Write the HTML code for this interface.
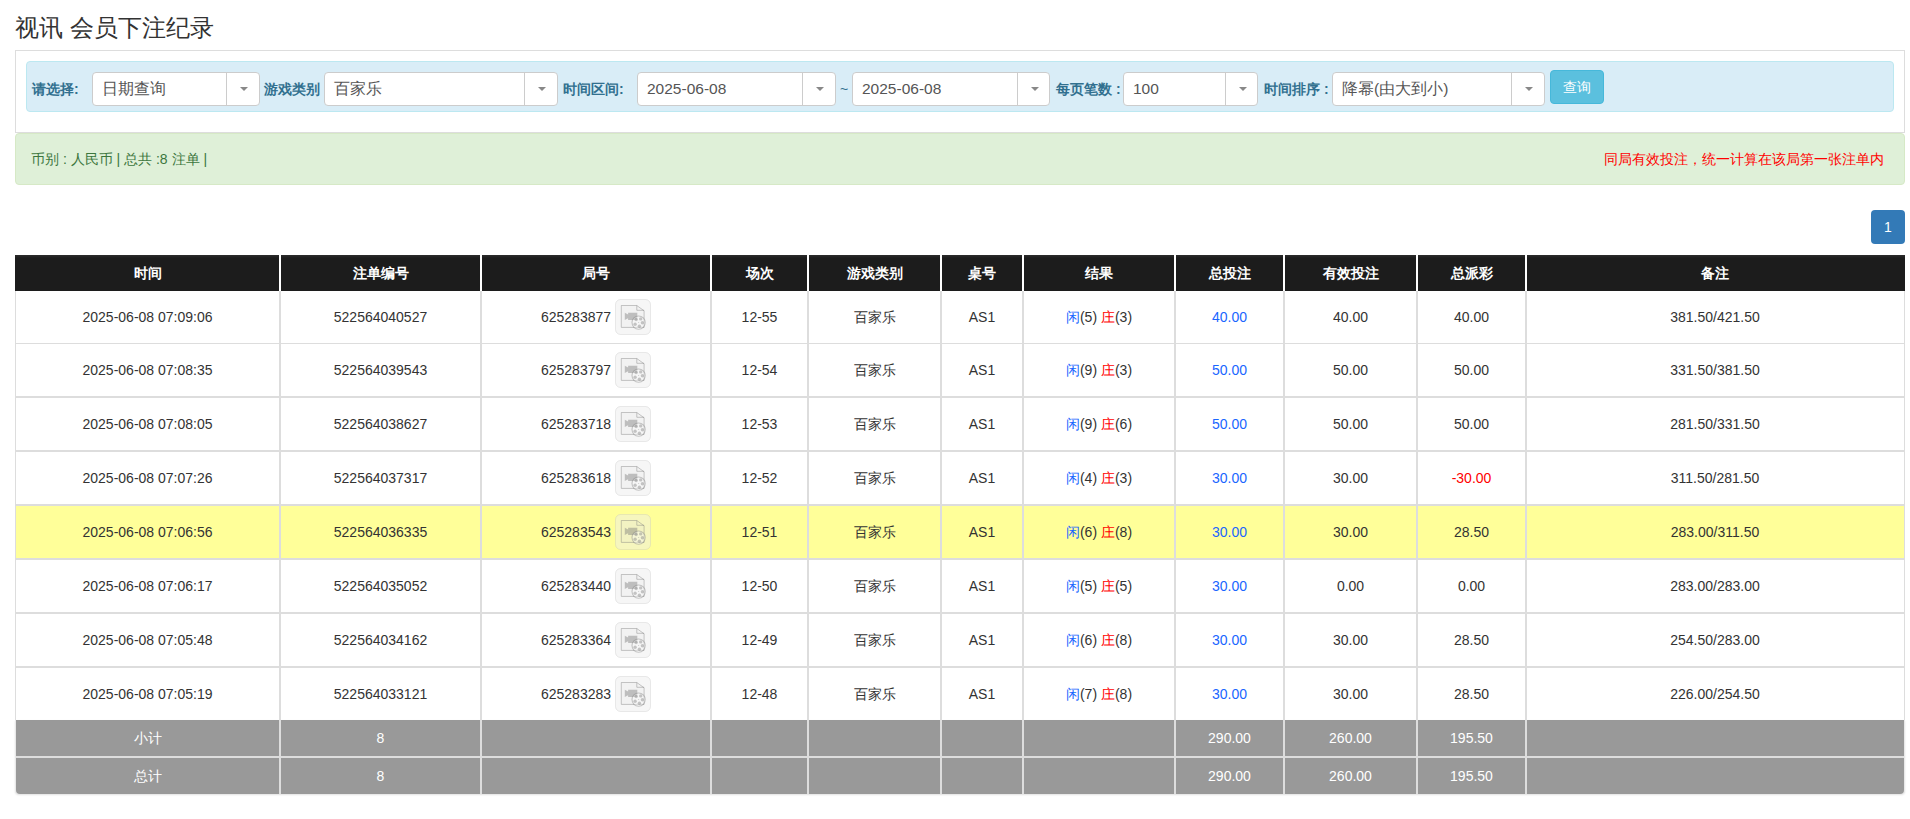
<!DOCTYPE html><html><head><meta charset="utf-8"><style>
*{box-sizing:border-box}
body{margin:0;width:1910px;height:819px;overflow:hidden;background:#fff;font-family:"Liberation Sans",sans-serif;color:#333;font-size:14px;position:relative}
.a{position:absolute;white-space:nowrap}
.title{left:15px;top:11px;font-size:24px;line-height:34px;color:#333}
.panel{left:15px;top:50px;width:1890px;height:83px;border:1px solid #ddd}
.well{left:26px;top:61px;width:1868px;height:51px;background:#d9edf7;border:1px solid #bce8f1;border-radius:4px}
.lbl{top:79px;font-weight:bold;color:#31708f;font-size:14px;line-height:20px}
.sel{position:absolute;top:72px;height:34px;background:#fff;border:1px solid #ccc;border-radius:4px}
.st{position:absolute;left:9px;top:6px;line-height:20px;font-size:15.5px;color:#555}
.dv{position:absolute;top:0;bottom:0;width:1px;background:#ccc}
.car{position:absolute;top:14px;width:0;height:0;border-left:4px solid transparent;border-right:4px solid transparent;border-top:4px solid #888}
.btn{left:1550px;top:70px;width:54px;height:34px;background:#5bc0de;border:1px solid #46b8da;border-radius:4px;color:#fff;text-align:center;line-height:32px;font-size:14px}
.alert{left:15px;top:133px;width:1890px;height:52px;background:#dff0d8;border:1px solid #d6e9c6;border-radius:4px}
.gt{left:31px;top:149px;color:#3c763d;line-height:20px}
.rt{left:1604px;top:149px;color:#f00;line-height:20px}
.pg{left:1871px;top:210px;width:34px;height:34px;background:#337ab7;border-radius:4px;color:#fff;text-align:center;line-height:34px;font-size:14px}
.th{background:linear-gradient(#2a2a2a,#1c1c1c 3px);color:#fff;font-weight:bold;text-align:center}
.cell{position:absolute;text-align:center;line-height:20px}
.b{color:#1a66ff}.r{color:#f00}
</style></head><body>
<div class="a title">视讯 会员下注纪录</div>
<div class="a panel"></div><div class="a well"></div>
<div class="a lbl" style="left:32px">请选择:</div>
<div class="sel" style="left:92px;width:168px"><span class="st">日期查询</span><div class="dv" style="left:133px"></div><div class="car" style="left:147px"></div></div>
<div class="a lbl" style="left:264px">游戏类别</div>
<div class="sel" style="left:324px;width:234px"><span class="st">百家乐</span><div class="dv" style="left:199px"></div><div class="car" style="left:213px"></div></div>
<div class="a lbl" style="left:563px">时间区间:</div>
<div class="sel" style="left:637px;width:199px"><span class="st">2025-06-08</span><div class="dv" style="left:164px"></div><div class="car" style="left:178px"></div></div>
<div class="a lbl" style="left:840px;font-weight:normal">~</div>
<div class="sel" style="left:852px;width:198px"><span class="st">2025-06-08</span><div class="dv" style="left:164px"></div><div class="car" style="left:178px"></div></div>
<div class="a lbl" style="left:1056px">每页笔数 :</div>
<div class="sel" style="left:1123px;width:135px"><span class="st">100</span><div class="dv" style="left:101px"></div><div class="car" style="left:115px"></div></div>
<div class="a lbl" style="left:1264px">时间排序 :</div>
<div class="sel" style="left:1332px;width:213px"><span class="st">降幂(由大到小)</span><div class="dv" style="left:178px"></div><div class="car" style="left:192px"></div></div>
<div class="a btn">查询</div>
<div class="a alert"></div><div class="a gt">币别 : 人民币 | 总共 :8 注单 |</div><div class="a rt">同局有效投注，统一计算在该局第一张注单内</div>
<div class="a pg">1</div>
<div class="a" style="left:15px;top:255px;width:1890px;height:540px;background:#fff"></div>
<div class="a" style="left:15px;top:255px;width:1890px;height:36px;background:linear-gradient(#2c2c2c,#1c1c1c 3px)"></div>
<div class="cell" style="left:15px;width:265px;top:263px;color:#fff;font-weight:bold">时间</div>
<div class="cell" style="left:280px;width:201px;top:263px;color:#fff;font-weight:bold">注单编号</div>
<div class="cell" style="left:481px;width:230px;top:263px;color:#fff;font-weight:bold">局号</div>
<div class="cell" style="left:711px;width:97px;top:263px;color:#fff;font-weight:bold">场次</div>
<div class="cell" style="left:808px;width:133px;top:263px;color:#fff;font-weight:bold">游戏类别</div>
<div class="cell" style="left:941px;width:82px;top:263px;color:#fff;font-weight:bold">桌号</div>
<div class="cell" style="left:1023px;width:152px;top:263px;color:#fff;font-weight:bold">结果</div>
<div class="cell" style="left:1175px;width:109px;top:263px;color:#fff;font-weight:bold">总投注</div>
<div class="cell" style="left:1284px;width:133px;top:263px;color:#fff;font-weight:bold">有效投注</div>
<div class="cell" style="left:1417px;width:109px;top:263px;color:#fff;font-weight:bold">总派彩</div>
<div class="cell" style="left:1526px;width:378px;top:263px;color:#fff;font-weight:bold">备注</div>
<div class="cell" style="left:15px;width:265px;top:307px">2025-06-08 07:09:06</div>
<div class="cell" style="left:280px;width:201px;top:307px">522564040527</div>
<div class="cell" style="left:481px;width:230px;top:299px;height:36px;line-height:36px;display:flex;justify-content:center;align-items:center"><span>625283877</span><span style="display:inline-block;width:36px;height:36px;margin-left:4px"><svg width="36" height="36" viewBox="0 0 36 36" style="display:block"><rect x="0.5" y="0.5" width="35" height="35" rx="5" fill="rgba(236,236,236,0.45)" stroke="rgba(190,190,190,0.3)"/>
<path d="M6.3 6.5 H21.8 L29.1 11.8 V28.4 H6.3 Z" fill="rgba(220,220,220,0.15)" stroke="rgba(120,120,120,0.4)" stroke-width="1"/>
<path d="M21.8 6.5 V11.3 H29.1" fill="none" stroke="rgba(120,120,120,0.4)" stroke-width="1"/>
<path d="M9.8 13.8 L13.1 15.6 V13.8 H22.3 V20.9 H13.1 V19.3 L9.8 21 Z" fill="rgba(120,120,120,0.42)"/>
<circle cx="23.6" cy="23.6" r="6.6" fill="rgba(255,255,255,0.35)" stroke="rgba(120,120,120,0.4)" stroke-width="1.1"/>
<g fill="rgba(120,120,120,0.4)"><circle cx="21.1" cy="20.5" r="1.7"/><circle cx="25.7" cy="19.9" r="1.7"/><circle cx="27.4" cy="23.8" r="1.7"/><circle cx="24.4" cy="27.2" r="1.7"/><circle cx="20.1" cy="25.2" r="1.7"/><circle cx="23.7" cy="23.4" r="0.5"/></g>
</svg></span></div>
<div class="cell" style="left:711px;width:97px;top:307px">12-55</div>
<div class="cell" style="left:808px;width:133px;top:307px">百家乐</div>
<div class="cell" style="left:941px;width:82px;top:307px">AS1</div>
<div class="cell" style="left:1023px;width:152px;top:307px"><span class="b">闲</span>(5) <span class="r">庄</span>(3)</div>
<div class="cell" style="left:1175px;width:109px;top:307px"><span class="b">40.00</span></div>
<div class="cell" style="left:1284px;width:133px;top:307px">40.00</div>
<div class="cell" style="left:1417px;width:109px;top:307px">40.00</div>
<div class="cell" style="left:1526px;width:378px;top:307px">381.50/421.50</div>
<div class="a" style="left:15px;top:343px;width:1890px;height:1px;background:#ddd"></div>
<div class="cell" style="left:15px;width:265px;top:360px">2025-06-08 07:08:35</div>
<div class="cell" style="left:280px;width:201px;top:360px">522564039543</div>
<div class="cell" style="left:481px;width:230px;top:352px;height:36px;line-height:36px;display:flex;justify-content:center;align-items:center"><span>625283797</span><span style="display:inline-block;width:36px;height:36px;margin-left:4px"><svg width="36" height="36" viewBox="0 0 36 36" style="display:block"><rect x="0.5" y="0.5" width="35" height="35" rx="5" fill="rgba(236,236,236,0.45)" stroke="rgba(190,190,190,0.3)"/>
<path d="M6.3 6.5 H21.8 L29.1 11.8 V28.4 H6.3 Z" fill="rgba(220,220,220,0.15)" stroke="rgba(120,120,120,0.4)" stroke-width="1"/>
<path d="M21.8 6.5 V11.3 H29.1" fill="none" stroke="rgba(120,120,120,0.4)" stroke-width="1"/>
<path d="M9.8 13.8 L13.1 15.6 V13.8 H22.3 V20.9 H13.1 V19.3 L9.8 21 Z" fill="rgba(120,120,120,0.42)"/>
<circle cx="23.6" cy="23.6" r="6.6" fill="rgba(255,255,255,0.35)" stroke="rgba(120,120,120,0.4)" stroke-width="1.1"/>
<g fill="rgba(120,120,120,0.4)"><circle cx="21.1" cy="20.5" r="1.7"/><circle cx="25.7" cy="19.9" r="1.7"/><circle cx="27.4" cy="23.8" r="1.7"/><circle cx="24.4" cy="27.2" r="1.7"/><circle cx="20.1" cy="25.2" r="1.7"/><circle cx="23.7" cy="23.4" r="0.5"/></g>
</svg></span></div>
<div class="cell" style="left:711px;width:97px;top:360px">12-54</div>
<div class="cell" style="left:808px;width:133px;top:360px">百家乐</div>
<div class="cell" style="left:941px;width:82px;top:360px">AS1</div>
<div class="cell" style="left:1023px;width:152px;top:360px"><span class="b">闲</span>(9) <span class="r">庄</span>(3)</div>
<div class="cell" style="left:1175px;width:109px;top:360px"><span class="b">50.00</span></div>
<div class="cell" style="left:1284px;width:133px;top:360px">50.00</div>
<div class="cell" style="left:1417px;width:109px;top:360px">50.00</div>
<div class="cell" style="left:1526px;width:378px;top:360px">331.50/381.50</div>
<div class="a" style="left:15px;top:396px;width:1890px;height:2px;background:#ddd"></div>
<div class="cell" style="left:15px;width:265px;top:414px">2025-06-08 07:08:05</div>
<div class="cell" style="left:280px;width:201px;top:414px">522564038627</div>
<div class="cell" style="left:481px;width:230px;top:406px;height:36px;line-height:36px;display:flex;justify-content:center;align-items:center"><span>625283718</span><span style="display:inline-block;width:36px;height:36px;margin-left:4px"><svg width="36" height="36" viewBox="0 0 36 36" style="display:block"><rect x="0.5" y="0.5" width="35" height="35" rx="5" fill="rgba(236,236,236,0.45)" stroke="rgba(190,190,190,0.3)"/>
<path d="M6.3 6.5 H21.8 L29.1 11.8 V28.4 H6.3 Z" fill="rgba(220,220,220,0.15)" stroke="rgba(120,120,120,0.4)" stroke-width="1"/>
<path d="M21.8 6.5 V11.3 H29.1" fill="none" stroke="rgba(120,120,120,0.4)" stroke-width="1"/>
<path d="M9.8 13.8 L13.1 15.6 V13.8 H22.3 V20.9 H13.1 V19.3 L9.8 21 Z" fill="rgba(120,120,120,0.42)"/>
<circle cx="23.6" cy="23.6" r="6.6" fill="rgba(255,255,255,0.35)" stroke="rgba(120,120,120,0.4)" stroke-width="1.1"/>
<g fill="rgba(120,120,120,0.4)"><circle cx="21.1" cy="20.5" r="1.7"/><circle cx="25.7" cy="19.9" r="1.7"/><circle cx="27.4" cy="23.8" r="1.7"/><circle cx="24.4" cy="27.2" r="1.7"/><circle cx="20.1" cy="25.2" r="1.7"/><circle cx="23.7" cy="23.4" r="0.5"/></g>
</svg></span></div>
<div class="cell" style="left:711px;width:97px;top:414px">12-53</div>
<div class="cell" style="left:808px;width:133px;top:414px">百家乐</div>
<div class="cell" style="left:941px;width:82px;top:414px">AS1</div>
<div class="cell" style="left:1023px;width:152px;top:414px"><span class="b">闲</span>(9) <span class="r">庄</span>(6)</div>
<div class="cell" style="left:1175px;width:109px;top:414px"><span class="b">50.00</span></div>
<div class="cell" style="left:1284px;width:133px;top:414px">50.00</div>
<div class="cell" style="left:1417px;width:109px;top:414px">50.00</div>
<div class="cell" style="left:1526px;width:378px;top:414px">281.50/331.50</div>
<div class="a" style="left:15px;top:450px;width:1890px;height:2px;background:#ddd"></div>
<div class="cell" style="left:15px;width:265px;top:468px">2025-06-08 07:07:26</div>
<div class="cell" style="left:280px;width:201px;top:468px">522564037317</div>
<div class="cell" style="left:481px;width:230px;top:460px;height:36px;line-height:36px;display:flex;justify-content:center;align-items:center"><span>625283618</span><span style="display:inline-block;width:36px;height:36px;margin-left:4px"><svg width="36" height="36" viewBox="0 0 36 36" style="display:block"><rect x="0.5" y="0.5" width="35" height="35" rx="5" fill="rgba(236,236,236,0.45)" stroke="rgba(190,190,190,0.3)"/>
<path d="M6.3 6.5 H21.8 L29.1 11.8 V28.4 H6.3 Z" fill="rgba(220,220,220,0.15)" stroke="rgba(120,120,120,0.4)" stroke-width="1"/>
<path d="M21.8 6.5 V11.3 H29.1" fill="none" stroke="rgba(120,120,120,0.4)" stroke-width="1"/>
<path d="M9.8 13.8 L13.1 15.6 V13.8 H22.3 V20.9 H13.1 V19.3 L9.8 21 Z" fill="rgba(120,120,120,0.42)"/>
<circle cx="23.6" cy="23.6" r="6.6" fill="rgba(255,255,255,0.35)" stroke="rgba(120,120,120,0.4)" stroke-width="1.1"/>
<g fill="rgba(120,120,120,0.4)"><circle cx="21.1" cy="20.5" r="1.7"/><circle cx="25.7" cy="19.9" r="1.7"/><circle cx="27.4" cy="23.8" r="1.7"/><circle cx="24.4" cy="27.2" r="1.7"/><circle cx="20.1" cy="25.2" r="1.7"/><circle cx="23.7" cy="23.4" r="0.5"/></g>
</svg></span></div>
<div class="cell" style="left:711px;width:97px;top:468px">12-52</div>
<div class="cell" style="left:808px;width:133px;top:468px">百家乐</div>
<div class="cell" style="left:941px;width:82px;top:468px">AS1</div>
<div class="cell" style="left:1023px;width:152px;top:468px"><span class="b">闲</span>(4) <span class="r">庄</span>(3)</div>
<div class="cell" style="left:1175px;width:109px;top:468px"><span class="b">30.00</span></div>
<div class="cell" style="left:1284px;width:133px;top:468px">30.00</div>
<div class="cell" style="left:1417px;width:109px;top:468px"><span class="r">-30.00</span></div>
<div class="cell" style="left:1526px;width:378px;top:468px">311.50/281.50</div>
<div class="a" style="left:15px;top:504px;width:1890px;height:2px;background:#ddd"></div>
<div class="a" style="left:15px;top:506px;width:1890px;height:54px;background:#ffff99"></div>
<div class="cell" style="left:15px;width:265px;top:522px">2025-06-08 07:06:56</div>
<div class="cell" style="left:280px;width:201px;top:522px">522564036335</div>
<div class="cell" style="left:481px;width:230px;top:514px;height:36px;line-height:36px;display:flex;justify-content:center;align-items:center"><span>625283543</span><span style="display:inline-block;width:36px;height:36px;margin-left:4px"><svg width="36" height="36" viewBox="0 0 36 36" style="display:block"><rect x="0.5" y="0.5" width="35" height="35" rx="5" fill="rgba(236,236,236,0.45)" stroke="rgba(190,190,190,0.3)"/>
<path d="M6.3 6.5 H21.8 L29.1 11.8 V28.4 H6.3 Z" fill="rgba(220,220,220,0.15)" stroke="rgba(120,120,120,0.4)" stroke-width="1"/>
<path d="M21.8 6.5 V11.3 H29.1" fill="none" stroke="rgba(120,120,120,0.4)" stroke-width="1"/>
<path d="M9.8 13.8 L13.1 15.6 V13.8 H22.3 V20.9 H13.1 V19.3 L9.8 21 Z" fill="rgba(120,120,120,0.42)"/>
<circle cx="23.6" cy="23.6" r="6.6" fill="rgba(255,255,255,0.35)" stroke="rgba(120,120,120,0.4)" stroke-width="1.1"/>
<g fill="rgba(120,120,120,0.4)"><circle cx="21.1" cy="20.5" r="1.7"/><circle cx="25.7" cy="19.9" r="1.7"/><circle cx="27.4" cy="23.8" r="1.7"/><circle cx="24.4" cy="27.2" r="1.7"/><circle cx="20.1" cy="25.2" r="1.7"/><circle cx="23.7" cy="23.4" r="0.5"/></g>
</svg></span></div>
<div class="cell" style="left:711px;width:97px;top:522px">12-51</div>
<div class="cell" style="left:808px;width:133px;top:522px">百家乐</div>
<div class="cell" style="left:941px;width:82px;top:522px">AS1</div>
<div class="cell" style="left:1023px;width:152px;top:522px"><span class="b">闲</span>(6) <span class="r">庄</span>(8)</div>
<div class="cell" style="left:1175px;width:109px;top:522px"><span class="b">30.00</span></div>
<div class="cell" style="left:1284px;width:133px;top:522px">30.00</div>
<div class="cell" style="left:1417px;width:109px;top:522px">28.50</div>
<div class="cell" style="left:1526px;width:378px;top:522px">283.00/311.50</div>
<div class="a" style="left:15px;top:558px;width:1890px;height:2px;background:#ddd"></div>
<div class="cell" style="left:15px;width:265px;top:576px">2025-06-08 07:06:17</div>
<div class="cell" style="left:280px;width:201px;top:576px">522564035052</div>
<div class="cell" style="left:481px;width:230px;top:568px;height:36px;line-height:36px;display:flex;justify-content:center;align-items:center"><span>625283440</span><span style="display:inline-block;width:36px;height:36px;margin-left:4px"><svg width="36" height="36" viewBox="0 0 36 36" style="display:block"><rect x="0.5" y="0.5" width="35" height="35" rx="5" fill="rgba(236,236,236,0.45)" stroke="rgba(190,190,190,0.3)"/>
<path d="M6.3 6.5 H21.8 L29.1 11.8 V28.4 H6.3 Z" fill="rgba(220,220,220,0.15)" stroke="rgba(120,120,120,0.4)" stroke-width="1"/>
<path d="M21.8 6.5 V11.3 H29.1" fill="none" stroke="rgba(120,120,120,0.4)" stroke-width="1"/>
<path d="M9.8 13.8 L13.1 15.6 V13.8 H22.3 V20.9 H13.1 V19.3 L9.8 21 Z" fill="rgba(120,120,120,0.42)"/>
<circle cx="23.6" cy="23.6" r="6.6" fill="rgba(255,255,255,0.35)" stroke="rgba(120,120,120,0.4)" stroke-width="1.1"/>
<g fill="rgba(120,120,120,0.4)"><circle cx="21.1" cy="20.5" r="1.7"/><circle cx="25.7" cy="19.9" r="1.7"/><circle cx="27.4" cy="23.8" r="1.7"/><circle cx="24.4" cy="27.2" r="1.7"/><circle cx="20.1" cy="25.2" r="1.7"/><circle cx="23.7" cy="23.4" r="0.5"/></g>
</svg></span></div>
<div class="cell" style="left:711px;width:97px;top:576px">12-50</div>
<div class="cell" style="left:808px;width:133px;top:576px">百家乐</div>
<div class="cell" style="left:941px;width:82px;top:576px">AS1</div>
<div class="cell" style="left:1023px;width:152px;top:576px"><span class="b">闲</span>(5) <span class="r">庄</span>(5)</div>
<div class="cell" style="left:1175px;width:109px;top:576px"><span class="b">30.00</span></div>
<div class="cell" style="left:1284px;width:133px;top:576px">0.00</div>
<div class="cell" style="left:1417px;width:109px;top:576px">0.00</div>
<div class="cell" style="left:1526px;width:378px;top:576px">283.00/283.00</div>
<div class="a" style="left:15px;top:612px;width:1890px;height:2px;background:#ddd"></div>
<div class="cell" style="left:15px;width:265px;top:630px">2025-06-08 07:05:48</div>
<div class="cell" style="left:280px;width:201px;top:630px">522564034162</div>
<div class="cell" style="left:481px;width:230px;top:622px;height:36px;line-height:36px;display:flex;justify-content:center;align-items:center"><span>625283364</span><span style="display:inline-block;width:36px;height:36px;margin-left:4px"><svg width="36" height="36" viewBox="0 0 36 36" style="display:block"><rect x="0.5" y="0.5" width="35" height="35" rx="5" fill="rgba(236,236,236,0.45)" stroke="rgba(190,190,190,0.3)"/>
<path d="M6.3 6.5 H21.8 L29.1 11.8 V28.4 H6.3 Z" fill="rgba(220,220,220,0.15)" stroke="rgba(120,120,120,0.4)" stroke-width="1"/>
<path d="M21.8 6.5 V11.3 H29.1" fill="none" stroke="rgba(120,120,120,0.4)" stroke-width="1"/>
<path d="M9.8 13.8 L13.1 15.6 V13.8 H22.3 V20.9 H13.1 V19.3 L9.8 21 Z" fill="rgba(120,120,120,0.42)"/>
<circle cx="23.6" cy="23.6" r="6.6" fill="rgba(255,255,255,0.35)" stroke="rgba(120,120,120,0.4)" stroke-width="1.1"/>
<g fill="rgba(120,120,120,0.4)"><circle cx="21.1" cy="20.5" r="1.7"/><circle cx="25.7" cy="19.9" r="1.7"/><circle cx="27.4" cy="23.8" r="1.7"/><circle cx="24.4" cy="27.2" r="1.7"/><circle cx="20.1" cy="25.2" r="1.7"/><circle cx="23.7" cy="23.4" r="0.5"/></g>
</svg></span></div>
<div class="cell" style="left:711px;width:97px;top:630px">12-49</div>
<div class="cell" style="left:808px;width:133px;top:630px">百家乐</div>
<div class="cell" style="left:941px;width:82px;top:630px">AS1</div>
<div class="cell" style="left:1023px;width:152px;top:630px"><span class="b">闲</span>(6) <span class="r">庄</span>(8)</div>
<div class="cell" style="left:1175px;width:109px;top:630px"><span class="b">30.00</span></div>
<div class="cell" style="left:1284px;width:133px;top:630px">30.00</div>
<div class="cell" style="left:1417px;width:109px;top:630px">28.50</div>
<div class="cell" style="left:1526px;width:378px;top:630px">254.50/283.00</div>
<div class="a" style="left:15px;top:666px;width:1890px;height:2px;background:#ddd"></div>
<div class="cell" style="left:15px;width:265px;top:684px">2025-06-08 07:05:19</div>
<div class="cell" style="left:280px;width:201px;top:684px">522564033121</div>
<div class="cell" style="left:481px;width:230px;top:676px;height:36px;line-height:36px;display:flex;justify-content:center;align-items:center"><span>625283283</span><span style="display:inline-block;width:36px;height:36px;margin-left:4px"><svg width="36" height="36" viewBox="0 0 36 36" style="display:block"><rect x="0.5" y="0.5" width="35" height="35" rx="5" fill="rgba(236,236,236,0.45)" stroke="rgba(190,190,190,0.3)"/>
<path d="M6.3 6.5 H21.8 L29.1 11.8 V28.4 H6.3 Z" fill="rgba(220,220,220,0.15)" stroke="rgba(120,120,120,0.4)" stroke-width="1"/>
<path d="M21.8 6.5 V11.3 H29.1" fill="none" stroke="rgba(120,120,120,0.4)" stroke-width="1"/>
<path d="M9.8 13.8 L13.1 15.6 V13.8 H22.3 V20.9 H13.1 V19.3 L9.8 21 Z" fill="rgba(120,120,120,0.42)"/>
<circle cx="23.6" cy="23.6" r="6.6" fill="rgba(255,255,255,0.35)" stroke="rgba(120,120,120,0.4)" stroke-width="1.1"/>
<g fill="rgba(120,120,120,0.4)"><circle cx="21.1" cy="20.5" r="1.7"/><circle cx="25.7" cy="19.9" r="1.7"/><circle cx="27.4" cy="23.8" r="1.7"/><circle cx="24.4" cy="27.2" r="1.7"/><circle cx="20.1" cy="25.2" r="1.7"/><circle cx="23.7" cy="23.4" r="0.5"/></g>
</svg></span></div>
<div class="cell" style="left:711px;width:97px;top:684px">12-48</div>
<div class="cell" style="left:808px;width:133px;top:684px">百家乐</div>
<div class="cell" style="left:941px;width:82px;top:684px">AS1</div>
<div class="cell" style="left:1023px;width:152px;top:684px"><span class="b">闲</span>(7) <span class="r">庄</span>(8)</div>
<div class="cell" style="left:1175px;width:109px;top:684px"><span class="b">30.00</span></div>
<div class="cell" style="left:1284px;width:133px;top:684px">30.00</div>
<div class="cell" style="left:1417px;width:109px;top:684px">28.50</div>
<div class="cell" style="left:1526px;width:378px;top:684px">226.00/254.50</div>
<div class="a" style="left:15px;top:720px;width:1890px;height:74px;background:#e8e8e8;border-radius:0 0 4px 4px;box-shadow:0 1px 2px rgba(0,0,0,.12)"></div>
<div class="a" style="left:16px;top:720px;width:1888px;height:74px;background:#999;border-radius:0 0 4px 4px"></div>
<div class="a" style="left:16px;top:756px;width:1888px;height:2px;background:#ddd"></div>
<div class="cell" style="left:15px;width:265px;top:728px;color:#fff">小计</div>
<div class="cell" style="left:280px;width:201px;top:728px;color:#fff">8</div>
<div class="cell" style="left:1175px;width:109px;top:728px;color:#fff">290.00</div>
<div class="cell" style="left:1284px;width:133px;top:728px;color:#fff">260.00</div>
<div class="cell" style="left:1417px;width:109px;top:728px;color:#fff">195.50</div>
<div class="cell" style="left:15px;width:265px;top:766px;color:#fff">总计</div>
<div class="cell" style="left:280px;width:201px;top:766px;color:#fff">8</div>
<div class="cell" style="left:1175px;width:109px;top:766px;color:#fff">290.00</div>
<div class="cell" style="left:1284px;width:133px;top:766px;color:#fff">260.00</div>
<div class="cell" style="left:1417px;width:109px;top:766px;color:#fff">195.50</div>
<div class="a" style="left:15px;top:291px;width:1px;height:429px;background:#ddd"></div>
<div class="a" style="left:279px;top:255px;width:2px;height:36px;background:#fff"></div>
<div class="a" style="left:279px;top:291px;width:2px;height:429px;background:#ddd"></div>
<div class="a" style="left:279px;top:720px;width:2px;height:74px;background:#ddd"></div>
<div class="a" style="left:480px;top:255px;width:2px;height:36px;background:#fff"></div>
<div class="a" style="left:480px;top:291px;width:2px;height:429px;background:#ddd"></div>
<div class="a" style="left:480px;top:720px;width:2px;height:74px;background:#ddd"></div>
<div class="a" style="left:710px;top:255px;width:2px;height:36px;background:#fff"></div>
<div class="a" style="left:710px;top:291px;width:2px;height:429px;background:#ddd"></div>
<div class="a" style="left:710px;top:720px;width:2px;height:74px;background:#ddd"></div>
<div class="a" style="left:807px;top:255px;width:2px;height:36px;background:#fff"></div>
<div class="a" style="left:807px;top:291px;width:2px;height:429px;background:#ddd"></div>
<div class="a" style="left:807px;top:720px;width:2px;height:74px;background:#ddd"></div>
<div class="a" style="left:940px;top:255px;width:2px;height:36px;background:#fff"></div>
<div class="a" style="left:940px;top:291px;width:2px;height:429px;background:#ddd"></div>
<div class="a" style="left:940px;top:720px;width:2px;height:74px;background:#ddd"></div>
<div class="a" style="left:1022px;top:255px;width:2px;height:36px;background:#fff"></div>
<div class="a" style="left:1022px;top:291px;width:2px;height:429px;background:#ddd"></div>
<div class="a" style="left:1022px;top:720px;width:2px;height:74px;background:#ddd"></div>
<div class="a" style="left:1174px;top:255px;width:2px;height:36px;background:#fff"></div>
<div class="a" style="left:1174px;top:291px;width:2px;height:429px;background:#ddd"></div>
<div class="a" style="left:1174px;top:720px;width:2px;height:74px;background:#ddd"></div>
<div class="a" style="left:1283px;top:255px;width:2px;height:36px;background:#fff"></div>
<div class="a" style="left:1283px;top:291px;width:2px;height:429px;background:#ddd"></div>
<div class="a" style="left:1283px;top:720px;width:2px;height:74px;background:#ddd"></div>
<div class="a" style="left:1416px;top:255px;width:2px;height:36px;background:#fff"></div>
<div class="a" style="left:1416px;top:291px;width:2px;height:429px;background:#ddd"></div>
<div class="a" style="left:1416px;top:720px;width:2px;height:74px;background:#ddd"></div>
<div class="a" style="left:1525px;top:255px;width:2px;height:36px;background:#fff"></div>
<div class="a" style="left:1525px;top:291px;width:2px;height:429px;background:#ddd"></div>
<div class="a" style="left:1525px;top:720px;width:2px;height:74px;background:#ddd"></div>
<div class="a" style="left:1904px;top:291px;width:1px;height:429px;background:#ddd"></div>
</body></html>
